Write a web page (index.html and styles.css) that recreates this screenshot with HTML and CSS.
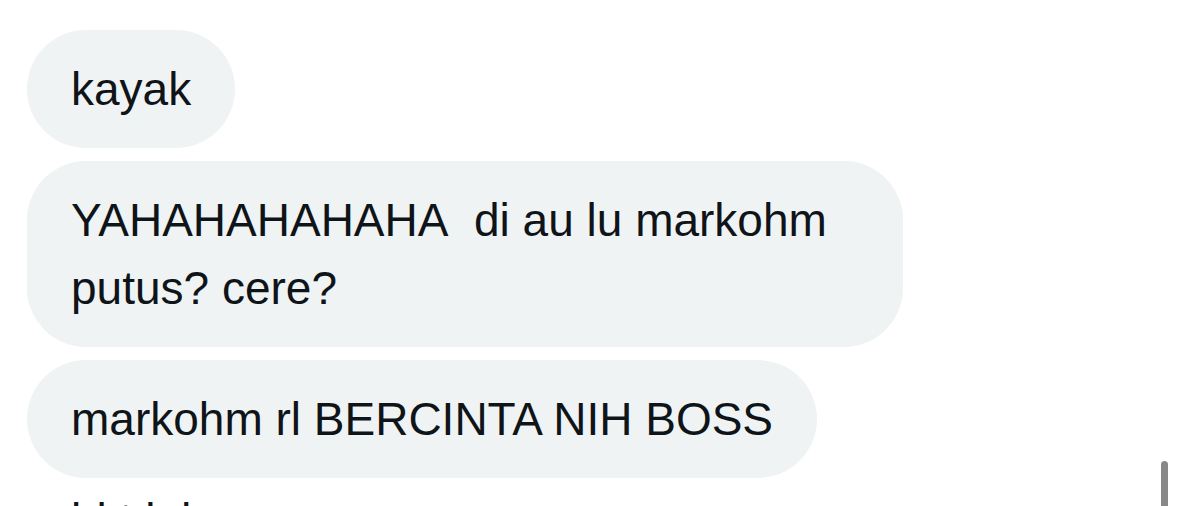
FILE: index.html
```html
<!DOCTYPE html>
<html lang="id">
<head>
<meta charset="utf-8">
<title>Pesan</title>
<link rel="stylesheet" href="styles.css">
</head>
<body>
<main class="thread">
  <div class="bubble">kayak</div>
  <div class="bubble">YAHAHAHAHAHA&nbsp; di au lu markohm putus? cere?</div>
  <div class="bubble">markohm rl BERCINTA NIH BOSS</div>
  <div class="next-line">bkt lah</div>
</main>
<div class="scrollbar"></div>
</body>
</html>
```
FILE: styles.css
```css
html, body {
  margin: 0;
  padding: 0;
  background: #ffffff;
  overflow: hidden;
}

body {
  width: 1179px;
  height: 506px;
  position: relative;
  font-family: "Liberation Sans", Arial, sans-serif;
  color: #0f1419;
}

.thread {
  display: flex;
  flex-direction: column;
  align-items: flex-start;
  gap: 13px;
  padding: 30px 0 0 27px;
}

.bubble {
  box-sizing: border-box;
  max-width: 876px;
  background: #eff3f4;
  border-radius: 59px;
  padding: 25px 44px;
  font-size: 46px;
  line-height: 68px;
}

.next-line {
  padding-left: 44px;
  margin-top: 3px;
  font-size: 46px;
  line-height: 52px;
}

.scrollbar {
  position: absolute;
  left: 1161px;
  top: 461px;
  width: 7px;
  height: 60px;
  background: #888888;
  border-radius: 4px 4px 0 0;
}
```
